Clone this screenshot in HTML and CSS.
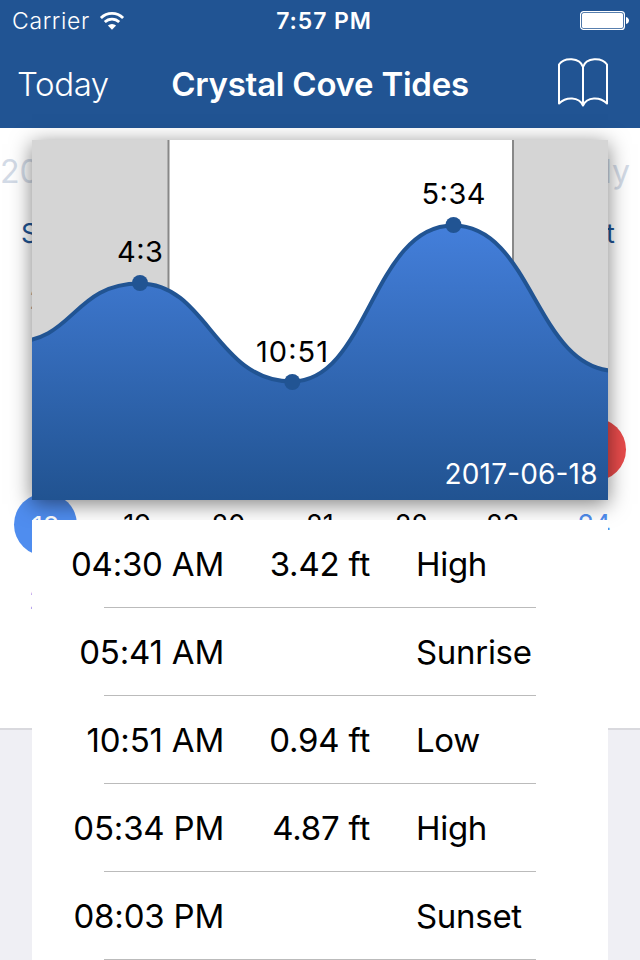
FILE: index.html
```html
<!doctype html>
<html>
<head>
	<meta charset="utf-8">
	<title>Crystal Cove Tides</title>
	<link rel="stylesheet" href="styles.css">
</head>
<body>
	<header class="header">
		<div class="status">
			<div class="carrier">
				<span>Carrier</span>
				<svg class="wifi" width="26" height="20" viewBox="0 0 26 20">
					<path d="M1.9 7.1a15.6 15.6 0 0 1 22.2 0" />
					<path d="M5.8 11.1a10.2 10.2 0 0 1 14.4 0" />
					<path class="wifi-dot" d="M13 18.8l-4.1-4.2a5.8 5.8 0 0 1 8.2 0z" />
				</svg>
			</div>
			<div class="clock">7:57 PM</div>
			<svg class="battery" width="49" height="20" viewBox="0 0 49 20">
				<rect x=".6" y=".6" width="43.8" height="17.8" rx="3" fill="none" stroke="#fff" stroke-width="1.2" />
				<rect x="2" y="2" width="41" height="15" rx="1.6" fill="#fff" />
				<path d="M46 6c4 1 4 6 0 7z" fill="#fff" />
			</svg>
		</div>
		<nav class="nav">
			<div class="today">Today</div>
			<h1 class="title">Crystal Cove Tides</h1>
			<svg class="book" width="50" height="50" viewBox="0 0 50 50">
				<path d="M25 9C22-1 6-1 1 6.500V45.500C8 38.500 21 38.500 25 47.500C29 38.500 42 38.500 49 45.500V6.500C44-1 28-1 25 9V47" />
			</svg>
		</nav>
	</header>

	<main class="main">
		<section class="calendar">
			<div class="months"><span>2017</span><span>July</span></div>
			<div class="week weekdays">
				<span>Sun</span><span></span><span></span><span></span><span></span><span></span><span>Sat</span>
			</div>
			<div class="week">
				<span class="other">28</span><span></span><span></span><span></span><span></span><span></span><span></span>
			</div>
			<div class="week"></div>
			<div class="week">
				<span></span><span></span><span></span><span></span><span></span><span></span><span><i class="dot today-dot"></i></span>
			</div>
			<div class="week">
				<span><i class="dot selected">18</i></span><span>19</span><span>20</span><span>21</span><span>22</span><span>23</span><span class="weekend">24</span>
			</div>
			<div class="week">
				<span class="weekend">25</span><span></span><span></span><span></span><span></span><span></span><span></span>
			</div>
		</section>

		<section class="panel">
			<svg class="chart" width="576" height="360" viewBox="32 140 576 360">
				<defs>
					<linearGradient id="water" gradientUnits="userSpaceOnUse" x1="0" y1="225" x2="0" y2="500">
						<stop offset="0" stop-color="#447fdb" />
						<stop offset="1" stop-color="#215391" />
					</linearGradient>
				</defs>
				<rect class="night" x="32" y="140" width="576" height="360" />
				<rect class="day" x="168.500" y="130" width="344.500" height="380" />
				<path class="tide" fill="url(#water)" d="M12 342C74 342 73 283.500 140 283.500S216 381.500 292 381.500S372.500 225.500 453 225.500S535 371 617 371V520H12Z" />
				<circle class="point" cx="140" cy="283" r="8" />
				<circle class="point" cx="292.300" cy="382" r="8" />
				<circle class="point" cx="453.500" cy="225" r="8" />
				<text x="117" y="262" textLength="46">4:3</text>
				<text x="256" y="362" textLength="72">10:51</text>
				<text x="421.500" y="204" textLength="64">5:34</text>
				<text class="date" x="444.500" y="484" textLength="153">2017-06-18</text>
			</svg>

			<div class="events">
				<div class="event"><span class="time">04:30 AM</span><span class="level">3.42 ft</span><span>High</span></div>
				<div class="event"><span class="time">05:41 AM</span><span class="level"></span><span>Sunrise</span></div>
				<div class="event"><span class="time">10:51 AM</span><span class="level">0.94 ft</span><span>Low</span></div>
				<div class="event"><span class="time">05:34 PM</span><span class="level">4.87 ft</span><span>High</span></div>
				<div class="event"><span class="time">08:03 PM</span><span class="level"></span><span>Sunset</span></div>
			</div>
		</section>
	</main>
</body>
</html>
```
FILE: styles.css
```css
* {
	box-sizing: border-box;
}

body {
	margin: 0;
	height: 960px;
	overflow: hidden;
	background: #efeff4;
	font-family: Inter, "Liberation Sans", sans-serif;
	color: #000;
}

svg {
	display: block;
}

.header {
	height: 128px;
	background: #215493;
	color: #fff;
}

.status {
	display: grid;
	grid-template-columns: 1fr auto 1fr;
	align-items: center;
	height: 42px;
	padding: 0 11px 0 12px;
	font-size: 23px;
}

.carrier {
	display: flex;
	align-items: center;
	gap: 9px;
	font-weight: 300;
	letter-spacing: .65px;
}

.wifi {
	fill: none;
	stroke: #fff;
	stroke-width: 2.8;
}

.wifi .wifi-dot {
	fill: #fff;
	stroke: none;
}

.clock {
	padding-left: 7px;
	font-weight: 600;
	letter-spacing: .9px;
}

.battery {
	justify-self: end;
}

.nav {
	display: grid;
	grid-template-columns: 1fr auto 1fr;
	align-items: center;
	height: 86px;
	padding: 0 32px 0 17px;
}

.today {
	margin-top: -2px;
	font-size: 33px;
	font-weight: 300;
	letter-spacing: -.4px;
}

.title {
	margin: -2px 0 0 15px;
	font-size: 33px;
	font-weight: 600;
	letter-spacing: -.25px;
}

.book {
	justify-self: end;
	margin-top: -4px;
	fill: none;
	stroke: #fff;
	stroke-width: 2;
	stroke-linejoin: round;
}

.main {
	position: relative;
}

.calendar {
	height: 602px;
	border-bottom: 2px solid #d9d9de;
	background: #fff;
}

.months {
	display: flex;
	justify-content: space-between;
	height: 83px;
	padding-right: 10px;
	line-height: 88px;
	font-size: 32px;
	color: #d3dbe7;
}

.week {
	display: grid;
	grid-template-columns: repeat(7, 1fr);
	align-items: center;
	justify-items: center;
	height: 75px;
	font-size: 27px;
	line-height: 36px;
}

.week > span {
	padding-top: 4px;
}

.weekdays {
	height: 45px;
	margin-bottom: 4px;
	color: #215493;
}

.weekdays > span {
	padding-top: 0;
}

.other {
	color: #999;
}

.weekend {
	color: #4f8def;
}

.dot {
	display: block;
	width: 63px;
	height: 63px;
	border-radius: 50%;
	line-height: 67px;
	text-align: center;
	font-style: normal;
}

.today-dot {
	background: #e84b4b;
}

.selected {
	background: #4f8def;
	color: #fff;
}

/* day details shown over the calendar */
.panel {
	position: absolute;
	top: 12px;
	left: 32px;
	width: 576px;
}

.chart {
	margin-bottom: 20px;
	box-shadow: 0 4px 20px rgba(0, 0, 0, .5);
	font-size: 29px;
}

.night {
	fill: #d5d5d5;
}

.day {
	fill: #fff;
	stroke: #888;
	stroke-width: 2;
}

.tide {
	stroke: #215493;
	stroke-width: 4;
}

.point {
	fill: #215493;
}

.date {
	fill: #fff;
	font-size: 28px;
}

.events {
	background: #fff;
	font-size: 33px;
	letter-spacing: -.3px;
}

.event {
	display: grid;
	grid-template-columns: 192px 146px 1fr;
	align-items: center;
	height: 88px;
	background: linear-gradient(#bbb, #bbb) 72px 87px / 432px 1px no-repeat;
}

.time,
.level {
	text-align: right;
	letter-spacing: -.2px;
}

.event span:last-child {
	padding-left: 46px;
}
```
